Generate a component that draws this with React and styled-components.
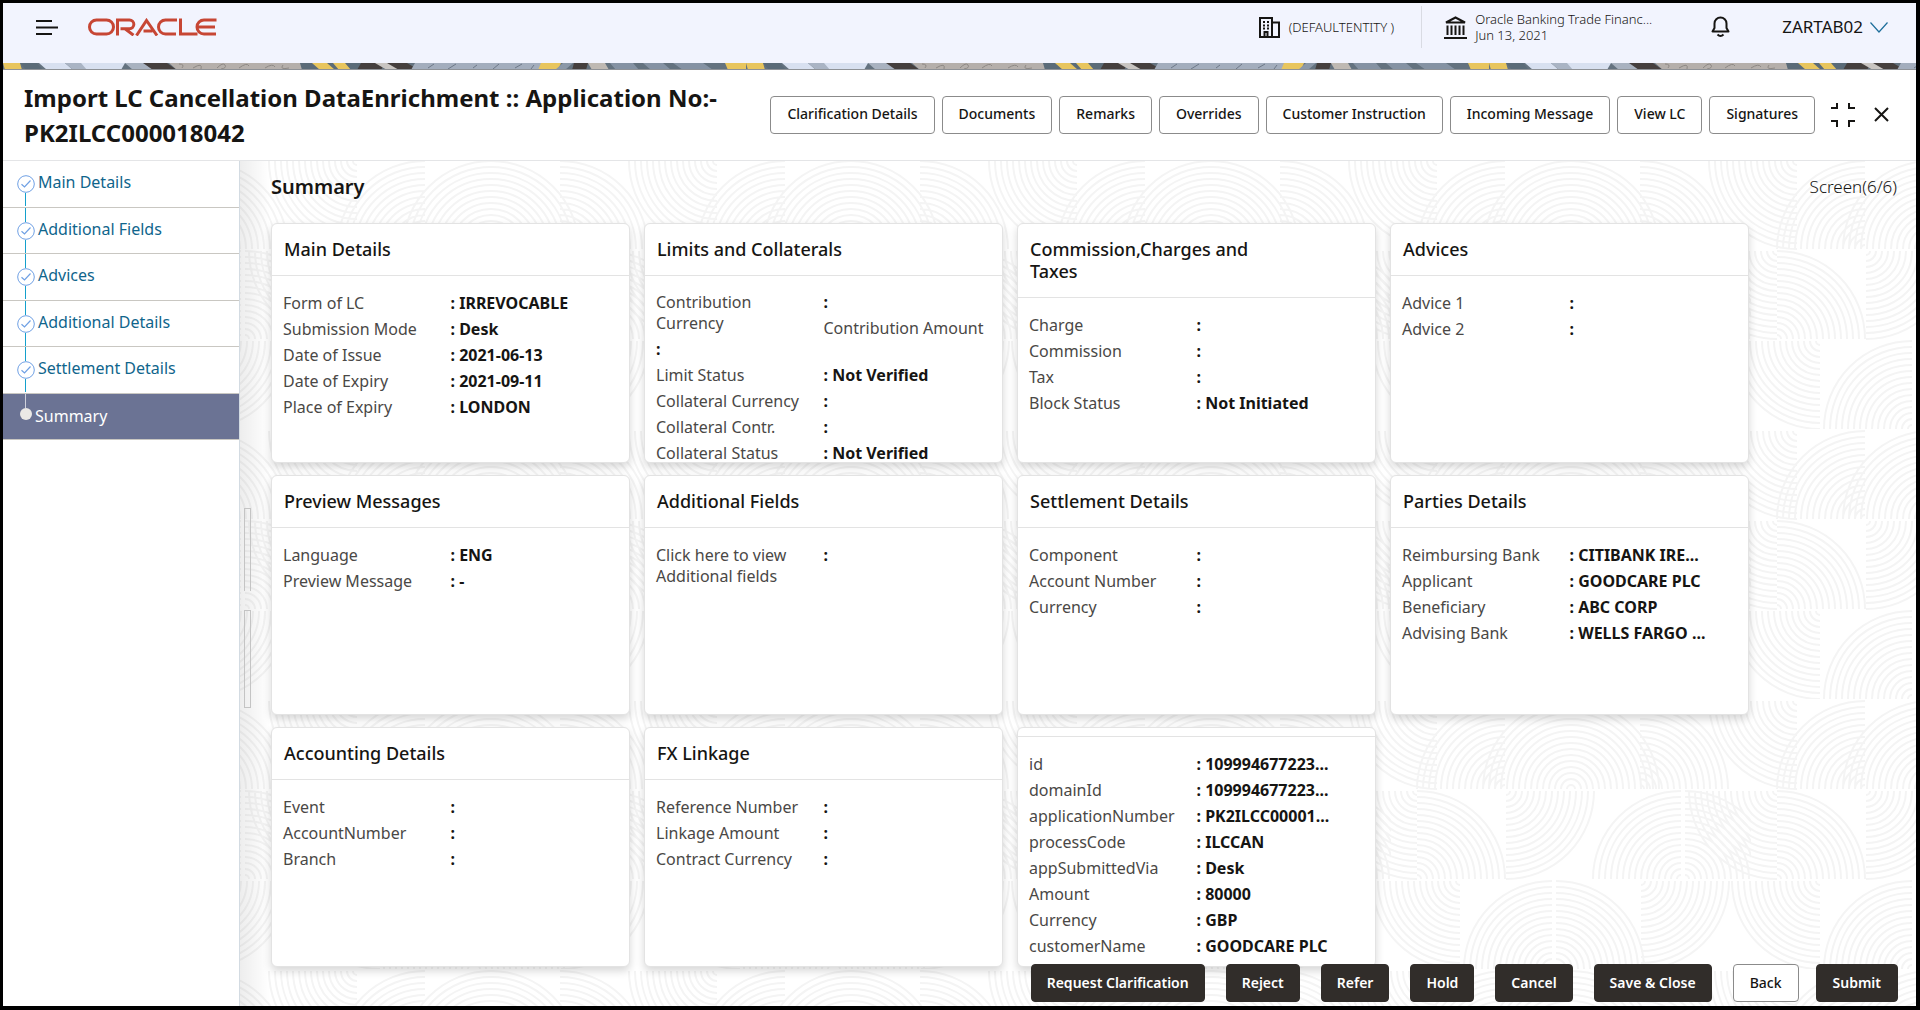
import React from "react";
import styled, { createGlobalStyle, css } from "styled-components";

const GlobalStyle = createGlobalStyle`
  *, *::before, *::after { box-sizing: border-box; }
  body {
    margin: 0;
    background: #fff;
    color: #161513;
    font-family: "Noto Sans", "Open Sans", sans-serif;
    font-size: 16px;
  }
  button { font: inherit; color: inherit; cursor: pointer; }
  h1, h2, h3, ul { margin: 0; padding: 0; }
`;

/* ---------- frame ---------- */

const Frame = styled.div`
  min-height: 100vh;
  display: flex;
  flex-direction: column;
  border: solid #000;
  border-width: 3px 4px 4px 3px;
`;

/* ---------- top bar ---------- */

const TopBar = styled.header`
  height: 60px;
  padding: 4px 28px 16px 33px;
  display: flex;
  align-items: center;
  background: #f2f4fe;
`;

const IconButton = styled.button`
  display: inline-flex;
  align-items: center;
  justify-content: center;
  padding: 0;
  border: 0;
  background: none;
`;

const Logo = styled.svg`
  margin-left: 30px;
  fill: none;
  stroke: #c74634;
  stroke-width: 3;
`;

const TopRight = styled.div`
  margin-left: auto;
  display: flex;
  align-items: center;
  height: 100%;
  line-height: 16px;
`;

const Entity = styled.div`
  display: flex;
  align-items: center;
  gap: 9px;
  height: 42px;
  padding-right: 27px;
  border-right: 1px solid #d9dbe3;
  font-size: 13px;
  font-weight: 300;
`;

const Bank = styled.div`
  display: flex;
  align-items: center;
  gap: 8px;
  margin-left: 22px;
  font-size: 13px;
  font-weight: 300;
`;

const BankText = styled.div`
  width: 182px;
  white-space: nowrap;
`;

const Bell = styled(IconButton)`
  margin-left: 54px;
`;

const UserButton = styled(IconButton)`
  gap: 7px;
  margin-left: 52px;
  font-size: 17px;
`;

const Strip = styled.svg`
  display: block;
  width: 100%;
  height: 7px;
  border-bottom: 1px solid #8f9297;
`;

/* ---------- title bar ---------- */

const TitleBar = styled.section`
  display: flex;
  align-items: center;
  justify-content: space-between;
  min-height: 91px;
  padding: 0 27px 1px 21px;
  border-bottom: 1px solid #e4e5e7;
`;

const Title = styled.h1`
  flex: 1;
  max-width: 730px;
  font-size: 24px;
  font-weight: 700;
  line-height: 35px;
`;

const Actions = styled.div`
  display: flex;
  align-items: center;
  gap: 7px;
`;

const Button = styled.button`
  height: 38px;
  padding: 0 ${(p) => (p.$footer ? 15 : 16)}px 2px;
  border: 1px solid ${(p) => (p.$dark ? "#312d2a" : "#8b8b8b")};
  border-radius: 4px;
  background: ${(p) => (p.$dark ? "#312d2a" : "#fff")};
  color: ${(p) => (p.$dark ? "#fff" : "#161513")};
  font-size: 14px;
  font-weight: ${(p) => (p.$dark ? 600 : 500)};
  white-space: nowrap;
`;

const WindowIcons = styled.div`
  display: flex;
  align-items: center;
  gap: 19px;
  margin-left: 9px;
`;

/* ---------- body ---------- */

const Body = styled.div`
  flex: 1;
  display: flex;
`;

const Sidebar = styled.nav`
  width: 237px;
  flex: none;
  border-right: 1px solid #d3dbe2;
`;

const Steps = styled.ul`
  height: 279px;
  display: grid;
  grid-template-rows: repeat(6, 1fr);
  list-style: none;
`;

const StepItem = styled.li`
  display: flex;
  padding-left: 13px;
  border-bottom: 1px solid #c9c7c2;
  ${(p) => p.$active && css`background: #6b7394;`}
`;

const Marker = styled.div`
  width: 19px;
  display: flex;
  flex-direction: column;
  align-items: center;
`;

const Line = styled.span`
  width: 1px;
  height: ${(p) => p.$h}px;
  background: ${(p) => (p.$hidden ? "transparent" : p.$pale ? "#cfd1dc" : "#14a0cc")};
`;

const Dot = styled.span`
  width: 12px;
  height: 12px;
  border-radius: 50%;
  background: #ebe9e6;
`;

const StepLink = styled.a`
  padding: ${(p) => (p.$active ? "11px 0 0 0" : "10px 0 0 3px")};
  color: ${(p) => (p.$active ? "#fff" : "#10658c")};
  font-size: 16px;
  line-height: 22px;
  text-decoration: none;
`;

const Main = styled.main`
  position: relative;
  flex: 1;
  min-width: 0;
  padding: 13px 19px 39px 31px;
  overflow: hidden;
`;

const Backdrop = styled.svg`
  position: absolute;
  inset: 0;
  width: 100%;
  height: 100%;
  z-index: -1;
`;

const Handles = styled.div`
  position: absolute;
  left: 4px;
  top: 347px;
  display: grid;
  gap: 19px;
`;

const Handle = styled.span`
  width: 7px;
  height: ${(p) => p.$h}px;
  border: 1px solid #c4c4c4;
  ${(p) => p.$open && css`border-bottom: 0;`}
`;

const MainHead = styled.div`
  display: flex;
  justify-content: space-between;
  align-items: center;
  height: 24px;
  margin-bottom: 25px;
`;

const Heading = styled.h2`
  font-size: 20px;
  font-weight: 600;
`;

const Counter = styled.span`
  font-size: 17px;
  font-weight: 300;
`;

const Cards = styled.div`
  display: grid;
  grid-template-columns: repeat(4, minmax(0, 359px));
  gap: 12px 14px;
`;

const Card = styled.section`
  height: 240px;
  overflow: hidden;
  border: 1px solid #e3e3e3;
  border-radius: 6px;
  background: #fff;
  box-shadow: 0 4px 8px rgba(0, 0, 0, 0.16);
`;

const CardHead = styled.div`
  min-height: 9px;
  padding: ${(p) => (p.$empty ? "0" : "14px 12px 15px")};
  border-bottom: 1px solid #e3e3e3;
`;

const CardTitle = styled.h3`
  max-width: 250px;
  font-size: 18px;
  font-weight: 500;
  line-height: 22px;
`;

const CardBody = styled.div`
  padding: ${(p) => (p.$dense ? 16 : 17)}px 11px 0;
  line-height: 21px;
`;

const Row = styled.div`
  display: grid;
  grid-template-columns: 1fr 1fr;
`;

const Label = styled.div`
  padding: 0 ${(p) => (p.$flush ? 0 : 16)}px 5px 0;
  font-size: 16px;
  color: #4a4846;
  white-space: ${(p) => (p.$flush ? "nowrap" : "normal")};
`;

const Value = styled.div`
  padding-bottom: 5px;
  font-size: 16px;
  font-weight: 700;
  white-space: nowrap;
`;

const Footer = styled.footer`
  position: absolute;
  right: 18px;
  bottom: 4px;
  display: flex;
  gap: 21px;
`;

const LastPair = styled.div`
  display: flex;
  gap: 17px;
`;

/* ---------- drawings ---------- */

const OracleLogo = () => (
  <Logo width="130" height="18" viewBox="0 0 130 18" role="img" aria-label="Oracle">
    <rect x="1.5" y="2" width="24" height="14" rx="7" />
    <path d="M29.5 17.5V2h12a4.3 4.3 0 0 1 0 8.700H32.500M37 10.700l8.500 6.500" />
    <path d="M48.500 17.500 58.500 2.500 69 17.500M55.500 13h9" />
    <path d="M89 2H77.500a7 7 0 0 0 0 14H88" />
    <path d="M92.500.5V16h17" />
    <path d="M128.500 2H116a7 7 0 0 0 0 14h12M110 9h17" />
  </Logo>
);

const MenuIcon = () => (
  <svg width="22" height="16" viewBox="0 0 22 16" stroke="#161513" strokeWidth="2">
    <path d="M0 2h16M0 8.500h22M0 15h16" />
  </svg>
);

const BuildingIcon = () => (
  <svg width="21" height="21" viewBox="0 0 21 21" fill="none" stroke="#161513" strokeWidth="2">
    <path d="M1 20V1h12v19M13 5.500h7V20M0 20h21M5.500 20v-5h3v5" />
    <path d="M4 5h2M8 5h2M4 8.500h2M8 8.500h2M4 11.500h2M8 11.500h2" />
  </svg>
);

const BankIcon = () => (
  <svg width="23" height="23" viewBox="0 0 23 23" fill="none" stroke="#161513" strokeWidth="2">
    <path d="M2 6.500 11.500 1.500 21 6.500zM0 22h23M3.500 9.500V19M7.500 9.500V19M11.500 9.500V19M15.500 9.500V19M19.500 9.500V19" />
  </svg>
);

const BellIcon = () => (
  <svg width="19" height="22" viewBox="0 0 19 22" fill="none" stroke="#161513" strokeWidth="2">
    <path d="M1.500 15.500h16l-2-3.500V7.500a6 6 0 0 0-12 0V12z" strokeLinejoin="round" />
    <path d="M6.500 18.500q3 3 6 0" />
  </svg>
);

const ChevronIcon = () => (
  <svg width="18" height="11" viewBox="0 0 18 11" fill="none" stroke="#1f6f9c" strokeWidth="1.200">
    <path d="M.5.500 9 10 17.500.5" />
  </svg>
);

const CollapseIcon = () => (
  <svg width="24" height="24" viewBox="0 0 24 24" fill="none" stroke="#161513" strokeWidth="2">
    <path d="M6 0v5H0M18 0v5h6M6 24v-6H0M18 24v-6h6" />
  </svg>
);

const CloseIcon = () => (
  <svg width="15" height="15" viewBox="0 0 15 15" stroke="#161513" strokeWidth="2">
    <path d="M1 1l13 13M14 1 1 14" />
  </svg>
);

const CheckIcon = () => (
  <svg width="18" height="18" viewBox="0 0 18 18" fill="none" stroke="#6fa0e4">
    <circle cx="9" cy="9" r="8.300" />
    <path d="M4.500 9.300 7.500 12l6-6.500" strokeWidth="1.200" />
  </svg>
);

/* Slanted blocks of the banner ribbon: fill, start, end, slant. */
const ribbon = [
  ["#e8c55e", 0, 17, 2],
  ["#5b6b78", 17, 34, 6],
  ["#d8e0f0", 36, 62, 8],
  ["#aab4c4", 62, 80, 8],
  ["#d8e0f0", 78, 104, 6],
  ["#d8e0f0", 104, 122, -4],
  ["#a9b2c0", 122, 144, 8],
  ["#453f3e", 140, 164, 10],
  ["#b5afab", 166, 297, 8],
  ["#5b6b78", 297, 360, 2],
  ["#e8c55e", 309, 324, 8],
  ["#e8c55e", 330, 342, 6],
  ["#453f3e", 358, 382, -4],
  ["#c9c5c2", 372, 390, 12],
  ["#453f3e", 384, 404, 12],
  ["#a3adbd", 412, 542, -4],
  ["#e8c55e", 538, 558, -3],
  ["#8b98a8", 560, 570, -8],
  ["#453f3e", 571, 585, -2],
  ["#bfb9b3", 585, 602, 4],
  ["#8592a3", 607, 630, 6],
  ["#8592a3", 640, 660, 8],
  ["#8592a3", 670, 700, 10],
  ["#e8c55e", 722, 743, 3],
];

const BannerStrip = () => (
  <Strip aria-hidden="true">
    <defs>
      <pattern id="ribbon" width="743" height="7" patternUnits="userSpaceOnUse">
        <rect width="743" height="7" fill="#64727f" />
        {ribbon.map(([fill, a, b, s], i) => (
          <polygon key={i} fill={fill} points={`${a},0 ${b},0 ${b + s},7 ${a + s},7`} />
        ))}
        <path
          d="M176 1q6 0 3 4M190 5q10-6 8 1M214 5q6-6 8-3t-4 4M236 5q8-6 10-2M262 5q8-5 10-1M280 2q-4 5 6 3"
          stroke="#8d8884"
          fill="none"
        />
        <path d="M425 5l6-4M445 6l8-5M470 5l4-3M490 6l6-5M512 5l7-4M528 6l3-4" stroke="#6d7888" />
      </pattern>
    </defs>
    <rect width="100%" height="7" fill="url(#ribbon)" />
  </Strip>
);

/* Concentric quarter arcs around (cx, cy), opening towards (dx, dy). */
const quarter = (cx, cy, dx, dy) => {
  let d = "";
  for (let r = 4; r <= 88; r += 6) {
    d += `M${cx + dx * r} ${cy}A${r} ${r} 0 0 ${dx * dy > 0 ? 1 : 0} ${cx} ${cy + dy * r}`;
  }
  return d;
};

const waves = [
  quarter(114, 90, -1, -1),
  quarter(180, 90, -1, -1),
  quarter(180, 90, 1, -1),
  quarter(249, 90, 1, -1),
  quarter(46, 2, -1, 1),
  quarter(406, 2, -1, 1),
  quarter(26, 180, 1, -1),
  quarter(386, 92, -1, 1),
  quarter(26, 92, -1, 1),
  quarter(115, 92, 1, 1),
  quarter(290, 180, -1, -1),
  quarter(294, 180, 1, -1),
  quarter(69, 182, -1, 1),
  quarter(429, 182, -1, 1),
  quarter(161, 270, -1, -1),
  quarter(165, 270, 1, -1),
  quarter(250, 182, 1, 1),
].join("");

const WaveBackdrop = () => (
  <Backdrop aria-hidden="true">
    <defs>
      <pattern id="waves" x="71" y="-2" width="360" height="270" patternUnits="userSpaceOnUse">
        <path d={waves} fill="none" stroke="#f4f4f4" strokeWidth="2" />
      </pattern>
      <linearGradient id="edge">
        <stop offset="0" stopColor="#000" stopOpacity="0.07" />
        <stop offset="1" stopColor="#000" stopOpacity="0" />
      </linearGradient>
    </defs>
    <rect width="100%" height="100%" fill="url(#waves)" />
    <rect width="30" height="100%" fill="url(#edge)" />
  </Backdrop>
);

/* ---------- data ---------- */

const steps = ["Main Details", "Additional Fields", "Advices", "Additional Details", "Settlement Details", "Summary"];

const actions = [
  "Clarification Details",
  "Documents",
  "Remarks",
  "Overrides",
  "Customer Instruction",
  "Incoming Message",
  "View LC",
  "Signatures",
];

const footerActions = ["Request Clarification", "Reject", "Refer", "Hold", "Cancel", "Save & Close"];

const cards = [
  {
    title: "Main Details",
    rows: [
      ["Form of LC", "IRREVOCABLE"],
      ["Submission Mode", "Desk"],
      ["Date of Issue", "2021-06-13"],
      ["Date of Expiry", "2021-09-11"],
      ["Place of Expiry", "LONDON"],
    ],
  },
  {
    title: "Limits and Collaterals",
    contribution: true,
    rows: [
      ["Limit Status", "Not Verified"],
      ["Collateral Currency", ""],
      ["Collateral Contr.", ""],
      ["Collateral Status", "Not Verified"],
    ],
  },
  {
    title: "Commission,Charges and Taxes",
    rows: [["Charge", ""], ["Commission", ""], ["Tax", ""], ["Block Status", "Not Initiated"]],
  },
  { title: "Advices", rows: [["Advice 1", ""], ["Advice 2", ""]] },
  { title: "Preview Messages", rows: [["Language", "ENG"], ["Preview Message", "-"]] },
  { title: "Additional Fields", rows: [["Click here to view Additional fields", ""]] },
  { title: "Settlement Details", rows: [["Component", ""], ["Account Number", ""], ["Currency", ""]] },
  {
    title: "Parties Details",
    rows: [
      ["Reimbursing Bank", "CITIBANK IRE..."],
      ["Applicant", "GOODCARE PLC"],
      ["Beneficiary", "ABC CORP"],
      ["Advising Bank", "WELLS FARGO ..."],
    ],
  },
  { title: "Accounting Details", rows: [["Event", ""], ["AccountNumber", ""], ["Branch", ""]] },
  { title: "FX Linkage", rows: [["Reference Number", ""], ["Linkage Amount", ""], ["Contract Currency", ""]] },
  {
    title: "",
    rows: [
      ["id", "109994677223..."],
      ["domainId", "109994677223..."],
      ["applicationNumber", "PK2ILCC00001..."],
      ["processCode", "ILCCAN"],
      ["appSubmittedVia", "Desk"],
      ["Amount", "80000"],
      ["Currency", "GBP"],
      ["customerName", "GOODCARE PLC"],
    ],
  },
];

const Step = ({ name, index }) => {
  const active = index === steps.length - 1;
  return (
    <StepItem $active={active}>
      <Marker>
        <Line $h={14} $hidden={index === 0} $pale={active} />
        {active ? <Dot /> : <CheckIcon />}
        {!active && <Line $h={13} />}
      </Marker>
      <StepLink href="#" $active={active} aria-current={active ? "step" : undefined}>
        {name}
      </StepLink>
    </StepItem>
  );
};

const SummaryCard = ({ title, rows, contribution }) => (
  <Card>
    <CardHead $empty={!title}>{title && <CardTitle>{title}</CardTitle>}</CardHead>
    <CardBody $dense={contribution}>
      {contribution && (
        <Row>
          <div>
            <Label>Contribution Currency</Label>
            <Value>:</Value>
          </div>
          <div>
            <Value>:</Value>
            <Label $flush>Contribution Amount</Label>
          </div>
        </Row>
      )}
      {rows.map(([label, value]) => (
        <Row key={label}>
          <Label>{label}</Label>
          <Value>: {value}</Value>
        </Row>
      ))}
    </CardBody>
  </Card>
);

export default function App() {
  return (
    <>
      <GlobalStyle />
      <Frame>
        <TopBar>
          <IconButton aria-label="Menu">
            <MenuIcon />
          </IconButton>
          <OracleLogo />
          <TopRight>
            <Entity>
              <BuildingIcon />
              (DEFAULTENTITY )
            </Entity>
            <Bank>
              <BankIcon />
              <BankText>
                Oracle Banking Trade Financ...
                <br />
                Jun 13, 2021
              </BankText>
            </Bank>
            <Bell aria-label="Notifications">
              <BellIcon />
            </Bell>
            <UserButton>
              ZARTAB02
              <ChevronIcon />
            </UserButton>
          </TopRight>
        </TopBar>
        <BannerStrip />
        <TitleBar>
          <Title>Import LC Cancellation DataEnrichment :: Application No:- PK2ILCC000018042</Title>
          <Actions>
            {actions.map((a) => (
              <Button key={a}>{a}</Button>
            ))}
            <WindowIcons>
              <IconButton aria-label="Collapse">
                <CollapseIcon />
              </IconButton>
              <IconButton aria-label="Close">
                <CloseIcon />
              </IconButton>
            </WindowIcons>
          </Actions>
        </TitleBar>
        <Body>
          <Sidebar>
            <Steps>
              {steps.map((s, i) => (
                <Step key={s} name={s} index={i} />
              ))}
            </Steps>
          </Sidebar>
          <Main>
            <WaveBackdrop />
            <Handles>
              <Handle $h={83} $open />
              <Handle $h={98} />
            </Handles>
            <MainHead>
              <Heading>Summary</Heading>
              <Counter>Screen(6/6)</Counter>
            </MainHead>
            <Cards>
              {cards.map((c) => (
                <SummaryCard key={c.title} {...c} />
              ))}
            </Cards>
            <Footer>
              {footerActions.map((a) => (
                <Button key={a} $dark $footer>
                  {a}
                </Button>
              ))}
              <LastPair>
                <Button>Back</Button>
                <Button $dark>Submit</Button>
              </LastPair>
            </Footer>
          </Main>
        </Body>
      </Frame>
    </>
  );
}
